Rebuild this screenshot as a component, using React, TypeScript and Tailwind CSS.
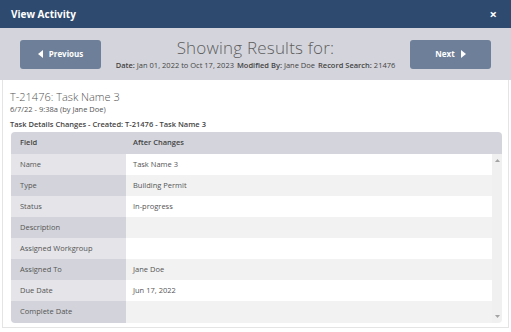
type Row = {
  field: string;
  value: string;
};

const rows: Row[] = [
  { field: "Name", value: "Task Name 3" },
  { field: "Type", value: "Building Permit" },
  { field: "Status", value: "In-progress" },
  { field: "Description", value: "" },
  { field: "Assigned Workgroup", value: "" },
  { field: "Assigned To", value: "Jane Doe" },
  { field: "Due Date", value: "Jun 17, 2022" },
  { field: "Complete Date", value: "" },
];

const NavButton = ({ label, dir }: { label: string; dir: "prev" | "next" }) => (
  <button className="w-[81px] h-[29px] rounded-[3px] bg-[#6e7f99] text-white text-[8px] font-bold flex items-center justify-center gap-[6px]">
    {dir === "prev" && (
      <svg width="5" height="8" viewBox="0 0 5 8">
        <path d="M5 0 L0 4 L5 8 Z" fill="white" />
      </svg>
    )}
    <span>{label}</span>
    {dir === "next" && (
      <svg width="5" height="8" viewBox="0 0 5 8">
        <path d="M0 0 L5 4 L0 8 Z" fill="white" />
      </svg>
    )}
  </button>
);

export default function App() {
  return (
    <div className="w-[511px] h-[332px] bg-white overflow-hidden font-['Open_Sans',sans-serif] text-[#555]">
      <div className="h-[28px] bg-[#2e4a6e] px-[11px] flex items-center justify-between text-white">
        <span className="text-[10px] font-bold">View Activity</span>
        <span className="text-[13px] font-bold leading-none mr-[3px]">×</span>
      </div>

      <div className="h-[52px] bg-[#d4d5dc] px-[20px] flex items-center justify-between">
        <NavButton label="Previous" dir="prev" />
        <div className="flex flex-col items-center pt-[2px]">
          <div className="text-[17px] leading-[20px] font-light text-[#5e5e5e] tracking-[0.2px]">
            Showing Results for:
          </div>
          <div className="text-[7.5px] text-[#444] mt-[2px] whitespace-nowrap">
            <span className="font-semibold">Date:</span> Jan 01, 2022 to Oct 17, 2023
            <span className="font-semibold ml-[3px]">Modified By:</span> Jane Doe
            <span className="font-semibold ml-[3px]">Record Search:</span> 21476
          </div>
        </div>
        <NavButton label="Next" dir="next" />
      </div>

      <div className="mx-[2px] h-[248px] border border-[#e4e4e4] border-t-0 pl-[8px] pr-[6px] pt-[10px]">
        <div className="text-[11px] leading-[14px] font-light text-[#555] -ml-[1px]">
          T-21476: Task Name 3
        </div>
        <div className="text-[7.5px] leading-[10px] -ml-[1px]">6/7/22 - 9:38a (by Jane Doe)</div>
        <div className="text-[7.5px] leading-[11px] font-semibold text-[#444] mt-[5px] -ml-[1px]">
          Task Details Changes - Created: T-21476 - Task Name 3
        </div>

        <div className="mt-[2px] rounded-[4px] overflow-hidden text-[7.5px]">
          <div className="h-[22px] bg-[#d4d5dc] flex items-center font-semibold text-[#444]">
            <div className="w-[115px] pl-[9px]">Field</div>
            <div className="pl-[7px]">After Changes</div>
          </div>
          <div className="flex">
            <div className="flex-1">
              {rows.map((row, i) => (
                <div key={row.field} className={`flex ${i === rows.length - 1 ? "h-[22px]" : "h-[21px]"}`}>
                  <div
                    className={`w-[115px] pl-[9px] flex items-center ${
                      i % 2 === 0 ? "bg-[#e4e4e9]" : "bg-[#d3d4db]"
                    }`}
                  >
                    {row.field}
                  </div>
                  <div
                    className={`flex-1 pl-[7px] flex items-center ${
                      i % 2 === 0 ? "bg-white" : "bg-[#f2f2f2]"
                    }`}
                  >
                    {row.value}
                  </div>
                </div>
              ))}
            </div>
            <div className="w-[10px] bg-[#f0f0f0] flex flex-col items-center justify-between py-[5px]">
              <svg width="5" height="3" viewBox="0 0 5 3">
                <path d="M0 3 L2.5 0 L5 3 Z" fill="#a3a3a3" />
              </svg>
              <svg width="5" height="3" viewBox="0 0 5 3">
                <path d="M0 0 L2.5 3 L5 0 Z" fill="#a3a3a3" />
              </svg>
            </div>
          </div>
        </div>
      </div>
    </div>
  );
}
